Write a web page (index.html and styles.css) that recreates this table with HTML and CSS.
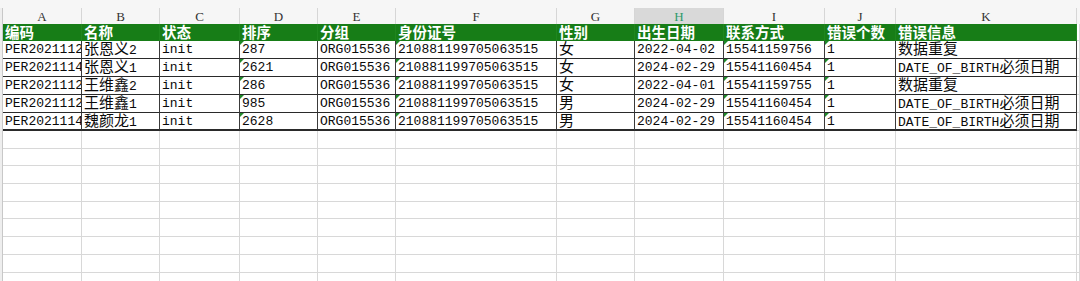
FILE: index.html
```html
<!DOCTYPE html>
<html>
<head>
<meta charset="utf-8">
<link rel="stylesheet" href="styles.css">
</head>
<body>
<div class="sheet">
  <div class="topstrip"></div>
  <div class="row letters">
    <div class="gut"></div>
    <div class="cl">A</div><div class="cl">B</div><div class="cl">C</div><div class="cl">D</div><div class="cl">E</div><div class="cl">F</div><div class="cl">G</div><div class="cl sel">H</div><div class="cl">I</div><div class="cl">J</div><div class="cl">K</div><div class="cl fill"></div>
  </div>
  <div class="row head">
    <div class="gut"></div>
    <div class="hc">编码</div><div class="hc">名称</div><div class="hc">状态</div><div class="hc">排序</div><div class="hc">分组</div><div class="hc">身份证号</div><div class="hc">性别</div><div class="hc">出生日期</div><div class="hc">联系方式</div><div class="hc">错误个数</div><div class="hc">错误信息</div><div class="ec"></div>
  </div>
  <div class="row data">
    <div class="gut"></div>
    <div class="dc">PER20211120001</div><div class="dc"><span class="cj">张恩义</span>2</div><div class="dc">init</div><div class="dc tri">287</div><div class="dc">ORG015536</div><div class="dc tri">210881199705063515</div><div class="dc"><span class="cj">女</span></div><div class="dc">2022-04-02</div><div class="dc tri">15541159756</div><div class="dc tri">1</div><div class="dc"><span class="cj">数据重复</span></div><div class="ec"></div>
  </div>
  <div class="row data">
    <div class="gut"></div>
    <div class="dc">PER20211140002</div><div class="dc"><span class="cj">张恩义</span>1</div><div class="dc">init</div><div class="dc tri">2621</div><div class="dc">ORG015536</div><div class="dc tri">210881199705063515</div><div class="dc"><span class="cj">女</span></div><div class="dc">2024-02-29</div><div class="dc tri">15541160454</div><div class="dc tri">1</div><div class="dc">DATE_OF_BIRTH<span class="cj">必须日期</span></div><div class="ec"></div>
  </div>
  <div class="row data">
    <div class="gut"></div>
    <div class="dc">PER20211120003</div><div class="dc"><span class="cj">王维鑫</span>2</div><div class="dc">init</div><div class="dc tri">286</div><div class="dc">ORG015536</div><div class="dc tri">210881199705063515</div><div class="dc"><span class="cj">女</span></div><div class="dc">2022-04-01</div><div class="dc tri">15541159755</div><div class="dc tri">1</div><div class="dc"><span class="cj">数据重复</span></div><div class="ec"></div>
  </div>
  <div class="row data">
    <div class="gut"></div>
    <div class="dc">PER20211120004</div><div class="dc"><span class="cj">王维鑫</span>1</div><div class="dc">init</div><div class="dc tri">985</div><div class="dc">ORG015536</div><div class="dc tri">210881199705063515</div><div class="dc"><span class="cj">男</span></div><div class="dc">2024-02-29</div><div class="dc tri">15541160454</div><div class="dc tri">1</div><div class="dc">DATE_OF_BIRTH<span class="cj">必须日期</span></div><div class="ec"></div>
  </div>
  <div class="row data last">
    <div class="gut"></div>
    <div class="dc">PER20211140005</div><div class="dc"><span class="cj">魏颜龙</span>1</div><div class="dc">init</div><div class="dc tri">2628</div><div class="dc">ORG015536</div><div class="dc tri">210881199705063515</div><div class="dc"><span class="cj">男</span></div><div class="dc">2024-02-29</div><div class="dc tri">15541160454</div><div class="dc tri">1</div><div class="dc">DATE_OF_BIRTH<span class="cj">必须日期</span></div><div class="ec"></div>
  </div>
  <div class="row empty"><div class="gut"></div><div class="ec"></div><div class="ec"></div><div class="ec"></div><div class="ec"></div><div class="ec"></div><div class="ec"></div><div class="ec"></div><div class="ec"></div><div class="ec"></div><div class="ec"></div><div class="ec"></div><div class="ec"></div></div>
  <div class="row empty"><div class="gut"></div><div class="ec"></div><div class="ec"></div><div class="ec"></div><div class="ec"></div><div class="ec"></div><div class="ec"></div><div class="ec"></div><div class="ec"></div><div class="ec"></div><div class="ec"></div><div class="ec"></div><div class="ec"></div></div>
  <div class="row empty"><div class="gut"></div><div class="ec"></div><div class="ec"></div><div class="ec"></div><div class="ec"></div><div class="ec"></div><div class="ec"></div><div class="ec"></div><div class="ec"></div><div class="ec"></div><div class="ec"></div><div class="ec"></div><div class="ec"></div></div>
  <div class="row empty"><div class="gut"></div><div class="ec"></div><div class="ec"></div><div class="ec"></div><div class="ec"></div><div class="ec"></div><div class="ec"></div><div class="ec"></div><div class="ec"></div><div class="ec"></div><div class="ec"></div><div class="ec"></div><div class="ec"></div></div>
  <div class="row empty"><div class="gut"></div><div class="ec"></div><div class="ec"></div><div class="ec"></div><div class="ec"></div><div class="ec"></div><div class="ec"></div><div class="ec"></div><div class="ec"></div><div class="ec"></div><div class="ec"></div><div class="ec"></div><div class="ec"></div></div>
  <div class="row empty"><div class="gut"></div><div class="ec"></div><div class="ec"></div><div class="ec"></div><div class="ec"></div><div class="ec"></div><div class="ec"></div><div class="ec"></div><div class="ec"></div><div class="ec"></div><div class="ec"></div><div class="ec"></div><div class="ec"></div></div>
  <div class="row empty"><div class="gut"></div><div class="ec"></div><div class="ec"></div><div class="ec"></div><div class="ec"></div><div class="ec"></div><div class="ec"></div><div class="ec"></div><div class="ec"></div><div class="ec"></div><div class="ec"></div><div class="ec"></div><div class="ec"></div></div>
  <div class="row empty"><div class="gut"></div><div class="ec"></div><div class="ec"></div><div class="ec"></div><div class="ec"></div><div class="ec"></div><div class="ec"></div><div class="ec"></div><div class="ec"></div><div class="ec"></div><div class="ec"></div><div class="ec"></div><div class="ec"></div></div>
  <div class="row empty"><div class="gut"></div><div class="ec"></div><div class="ec"></div><div class="ec"></div><div class="ec"></div><div class="ec"></div><div class="ec"></div><div class="ec"></div><div class="ec"></div><div class="ec"></div><div class="ec"></div><div class="ec"></div><div class="ec"></div></div>
</div>
</body>
</html>
```

FILE: styles.css
```css
html, body {
  margin: 0;
  padding: 0;
  background: #ffffff;
  overflow: hidden;
}
.sheet {
  width: 1080px;
  height: 281px;
  overflow: hidden;
  display: flex;
  flex-direction: column;
}
.topstrip {
  height: 8px;
  background: #f6f6f6;
  flex: none;
}
.row {
  display: grid;
  grid-template-columns: 3px 79px 78px 80px 78px 78px 161px 78px 89px 101px 71px 181px 1fr;
  flex: none;
}
.row > div {
  box-sizing: border-box;
  overflow: hidden;
  white-space: nowrap;
  position: relative;
}
.gut {
  background: #eeeeee;
  border-right: 1px solid #c8c8c8;
}
.letters {
  height: 16px;
  background: #f6f6f6;
}
.cl {
  border-right: 1px solid #d6d6d6;
  font-family: "Liberation Serif", serif;
  font-size: 13px;
  line-height: 17px;
  color: #333;
  text-align: center;
}
.cl.sel {
  background: #d9d9d9;
  color: #2f9a6a;
}
.cl.fill {
  border-right: none;
}
.head {
  height: 17px;
}
.hc {
  background: #177d17;
  border-right: 1px solid #1f861f;
  color: #ffffff;
  font-family: "Noto Sans CJK SC", sans-serif;
  font-weight: 700;
  font-size: 14.5px;
  line-height: 16px;
  padding-left: 2px;
}
.ec {
  border-right: 1px solid #d8d8d8;
  border-bottom: 1px solid #d8d8d8;
}
.data {
  height: 18px;
}
.dc {
  border-right: 1px solid #3a3a3a;
  border-bottom: 1px solid #2a2a2a;
  font-family: "Liberation Mono", "Noto Sans CJK SC", monospace;
  font-size: 13px;
  line-height: 18px;
  color: #0a0a0a;
  padding-left: 2px;
}
.last .dc {
  border-bottom: 2px solid #2a2a2a;
}
.cj {
  font-family: "Noto Sans CJK SC", sans-serif;
  font-size: 15px;
  line-height: 14px;
  vertical-align: baseline;
}
.tri::before {
  content: "";
  position: absolute;
  left: 0;
  top: 0;
  width: 0;
  height: 0;
  border-top: 4px solid #1f8a2a;
  border-right: 4px solid transparent;
}
.empty {
  height: 17.7px;
}
```
